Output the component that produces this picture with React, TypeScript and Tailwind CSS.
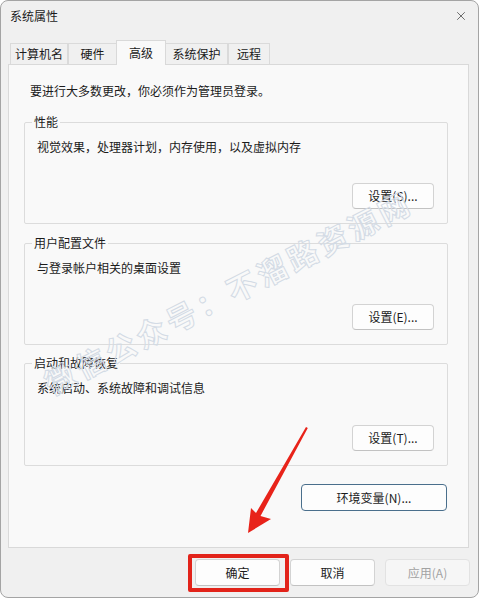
import { X } from 'lucide-react';

const font = "font-['Microsoft_YaHei_UI','Noto_Sans_CJK_SC',sans-serif]";

const tabs = [
  { label: '计算机名', w: 'w-[58px]' },
  { label: '硬件', w: 'w-[49px]' },
  { label: '高级', w: 'w-[50px]', active: true },
  { label: '系统保护', w: 'w-[63px]' },
  { label: '远程', w: 'w-[42px]' },
];

function Btn({ children, className = '' }: { children: React.ReactNode; className?: string }) {
  return (
    <button
      className={`flex items-center justify-center rounded-[4px] border border-[#d3d3d3] border-b-[#c2c2c2] bg-[#fdfdfd] text-[12px] text-[#1b1b1b] ${className}`}
    >
      {children}
    </button>
  );
}

function Group({ title, desc, btn, h }: { title: string; desc: string; btn: string; h: string }) {
  return (
    <div className={`relative flex flex-col rounded-[2px] border border-[#dcdcdc] ${h}`}>
      <span className="absolute -top-[9px] left-[7px] bg-[#f9f9f9] px-[2px] text-[12px] leading-[16px]">{title}</span>
      <p className="pl-[12px] pt-[16px] text-[12px] leading-[16px]">{desc}</p>
      <Btn className="mb-[14px] mr-[13px] mt-auto h-[26px] w-[82px] self-end">{btn}</Btn>
    </div>
  );
}

export default function App() {
  return (
    <div className={`relative flex h-[598px] w-[479px] flex-col overflow-hidden rounded-[8px] border border-[#a4a4a4] bg-[#f0f0f0] text-[#1b1b1b] ${font}`}>
      {/* title bar */}
      <div className="flex h-[29px] items-center justify-between pl-[9px] pr-[10px]">
        <span className="text-[12px]">系统属性</span>
        <X className="h-[14px] w-[14px] text-[#333]" strokeWidth={1.2} />
      </div>

      {/* tabs */}
      <div className="flex h-[34px] items-end pl-[9px]">
        {tabs.map((t) =>
          t.active ? (
            <div
              key={t.label}
              className={`relative z-10 -mb-px -mx-[1px] flex h-[25px] items-start justify-center border border-b-0 border-[#d9d9d9] bg-[#f9f9f9] pt-[3px] text-[12px] ${t.w}`}
            >
              {t.label}
            </div>
          ) : (
            <div
              key={t.label}
              className={`flex h-[21px] items-center justify-center border border-b-0 border-[#dadada] bg-[#f0f0f0] text-[12px] ${t.w}`}
            >
              {t.label}
            </div>
          )
        )}
      </div>

      {/* panel */}
      <div className="ml-[7px] flex h-[484px] w-[461px] flex-col border border-[#d9d9d9] bg-[#f9f9f9]">
        <p className="pl-[21px] pt-[18px] text-[12px] leading-[16px]">要进行大多数更改，你必须作为管理员登录。</p>
        <div className="ml-[15px] mt-[23px] flex w-[424px] flex-col">
          <Group title="性能" desc="视觉效果，处理器计划，内存使用，以及虚拟内存" btn="设置(S)..." h="h-[102px]" />
          <div className="mt-[19px]">
            <Group title="用户配置文件" desc="与登录帐户相关的桌面设置" btn="设置(E)..." h="h-[102px]" />
          </div>
          <div className="mt-[18px]">
            <Group title="启动和故障恢复" desc="系统启动、系统故障和调试信息" btn="设置(T)..." h="h-[103px]" />
          </div>
          <Btn className="mr-[1px] mt-[18px] h-[27px] w-[146px] self-end !border-[#4a6f8c]">环境变量(N)...</Btn>
        </div>
      </div>

      {/* bottom buttons */}
      <div className="flex justify-end gap-[10px] pr-[8px] pt-[11px]">
        <div className="relative">
          <Btn className="h-[27px] w-[85px]">确定</Btn>
          <div className="absolute -bottom-[6px] -left-[7px] -right-[9px] -top-[5px] rounded-[2px] border-[4px] border-[#e2231a]" />
        </div>
        <Btn className="h-[27px] w-[85px]">取消</Btn>
        <button className="flex h-[27px] w-[85px] items-center justify-center rounded-[4px] border border-[#e2e2e2] bg-[#f6f6f6] text-[12px] text-[#a3a3a3]">
          应用(A)
        </button>
      </div>

      {/* watermark */}
      <span className="pointer-events-none absolute left-[227px] top-[291px] -translate-x-1/2 -translate-y-1/2 -rotate-[27deg] whitespace-nowrap text-[30px] font-bold tracking-[4px] text-transparent [-webkit-text-stroke:1px_#d3dbe5]">
        微信公众号：不溜路资源网
      </span>

      {/* red arrow */}
      <svg className="pointer-events-none absolute -left-px -top-px" width="479" height="598" viewBox="0 0 479 598">
        <polygon
          points="248,533 251,508 256,513 306,427 307.8,428 260.5,516 271,519"
          fill="#e8231a"
        />
      </svg>
    </div>
  );
}
